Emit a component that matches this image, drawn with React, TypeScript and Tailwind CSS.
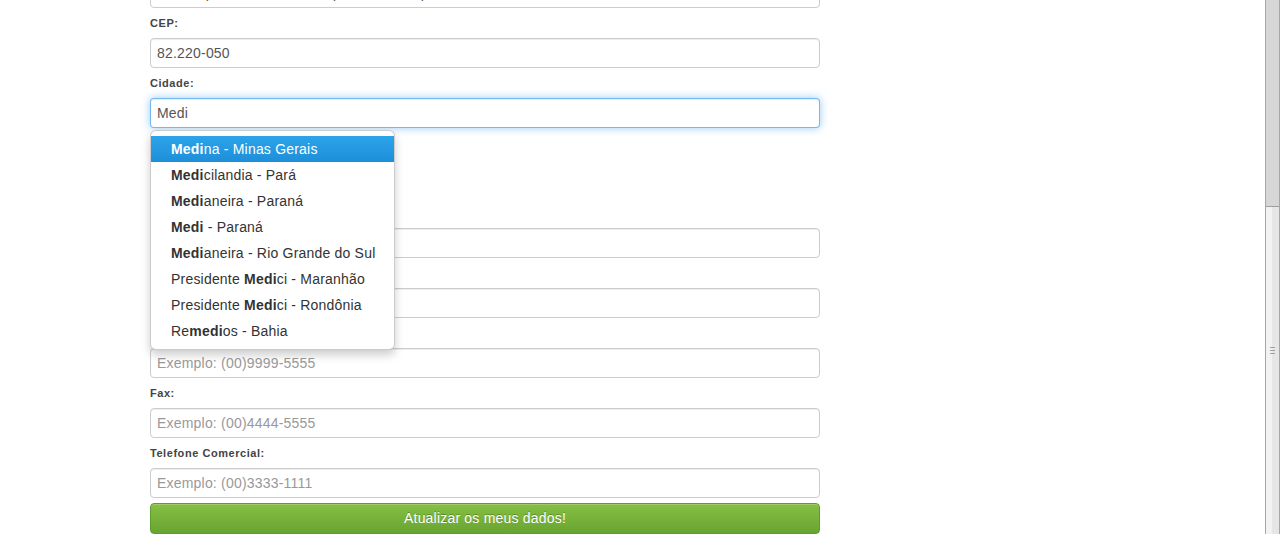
import React from "react";

const font = { fontFamily: '"Liberation Sans", Arial, Helvetica, sans-serif' };

const options: [string, string, string][] = [
  ["", "Medi", "na - Minas Gerais"],
  ["", "Medi", "cilandia - Pará"],
  ["", "Medi", "aneira - Paraná"],
  ["", "Medi", " - Paraná"],
  ["", "Medi", "aneira - Rio Grande do Sul"],
  ["Presidente ", "Medi", "ci - Maranhão"],
  ["Presidente ", "Medi", "ci - Rondônia"],
  ["Re", "medi", "os - Bahia"],
];

// labels sitting under the open autocomplete list are covered, so keep them invisible
function Label({ children, covered }: { children: React.ReactNode; covered?: boolean }) {
  return (
    <label
      className={
        covered
          ? "invisible block mt-[6px] mb-[6px] h-[18px] leading-[18px] text-[11px] font-bold tracking-[0.55px] text-[#444]"
          : "block mt-[6px] mb-[6px] h-[18px] leading-[18px] text-[11px] font-bold tracking-[0.55px] text-[#444]"
      }
    >
      {children}
    </label>
  );
}

function Field({ value, placeholder }: { value?: string; placeholder?: string }) {
  return (
    <input
      readOnly
      value={value}
      placeholder={placeholder}
      className="block w-[670px] h-[30px] px-[6px] text-[14px] tracking-[0.2px] text-[#555] placeholder:text-[#999] bg-white border border-[#ccc] rounded-[4px] shadow-[inset_0_1px_1px_rgba(0,0,0,0.075)] outline-none"
      style={font}
    />
  );
}

export default function App() {
  return (
    <div className="flex h-[534px] w-[1280px] overflow-hidden bg-white" style={font}>
      <div className="flex-1 pl-[150px]">
        <div className="-mt-[22px]">
          <Field value="Rua Capitão Leônidas Marques, 1392 - apto 12" />

          <Label>CEP:</Label>
          <Field value="82.220-050" />

          <Label>Cidade:</Label>
          <div className="relative">
            <input
              readOnly
              value="Medi"
              className="block w-[670px] h-[30px] px-[6px] text-[14px] tracking-[0.2px] text-[#555] bg-white border border-[rgba(82,168,236,0.8)] rounded-[4px] shadow-[inset_0_1px_1px_rgba(0,0,0,0.075),0_0_8px_rgba(82,168,236,0.6)] outline-none"
              style={font}
            />
            <ul className="absolute left-0 top-[32px] z-10 w-[245px] py-[5px] bg-white border border-[rgba(0,0,0,0.2)] rounded-[6px] shadow-[0_5px_10px_rgba(0,0,0,0.2)]">
              {options.map(([pre, bold, post], i) => (
                <li
                  key={i}
                  className={
                    i === 0
                      ? "h-[26px] leading-[26px] pl-[20px] text-[14px] tracking-[0.2px] text-white bg-gradient-to-b from-[#2ca3ea] to-[#1d8fd9] whitespace-nowrap"
                      : "h-[26px] leading-[26px] pl-[20px] text-[14px] tracking-[0.2px] text-[#333] whitespace-nowrap"
                  }
                >
                  {pre}
                  <strong className="font-bold">{bold}</strong>
                  {post}
                </li>
              ))}
            </ul>
          </div>

          <Label covered>Estado:</Label>
          <div className="w-[220px] h-[30px] mb-[16px] border border-[#ccc] rounded-[4px]" />

          <Label covered>Bairro:</Label>
          <Field />

          <Label covered>Complemento:</Label>
          <Field />

          <Label covered>Telefone:</Label>
          <Field placeholder="Exemplo: (00)9999-5555" />

          <Label>Fax:</Label>
          <Field placeholder="Exemplo: (00)4444-5555" />

          <Label>Telefone Comercial:</Label>
          <Field placeholder="Exemplo: (00)3333-1111" />

          <button
            className="mt-[5px] block w-[670px] h-[31px] text-[14px] tracking-[0.2px] text-white rounded-[4px] border border-[#5f9b2d] bg-gradient-to-b from-[#86c043] to-[#68a431] shadow-[inset_0_1px_0_rgba(255,255,255,0.2)] [text-shadow:0_-1px_0_rgba(0,0,0,0.25)]"
            style={font}
          >
            Atualizar os meus dados!
          </button>
        </div>
      </div>

      <div className="w-[15px] h-full flex flex-col border-l border-[#a6a6a6] border-r border-r-[#a6a6a6]">
        <div className="h-[207px] bg-[#d6d6d6] border-b border-[#9e9e9e]" />
        <div className="flex-1 flex bg-gradient-to-r from-[#f2f2f2] from-50% to-[#e6e6e6] to-50% items-center justify-center">
          <div className="flex flex-col gap-[2px] -mt-[40px]">
            <div className="w-[5px] h-px bg-[#a0a0a0]" />
            <div className="w-[5px] h-px bg-[#a0a0a0]" />
            <div className="w-[5px] h-px bg-[#a0a0a0]" />
          </div>
        </div>
      </div>
    </div>
  );
}
